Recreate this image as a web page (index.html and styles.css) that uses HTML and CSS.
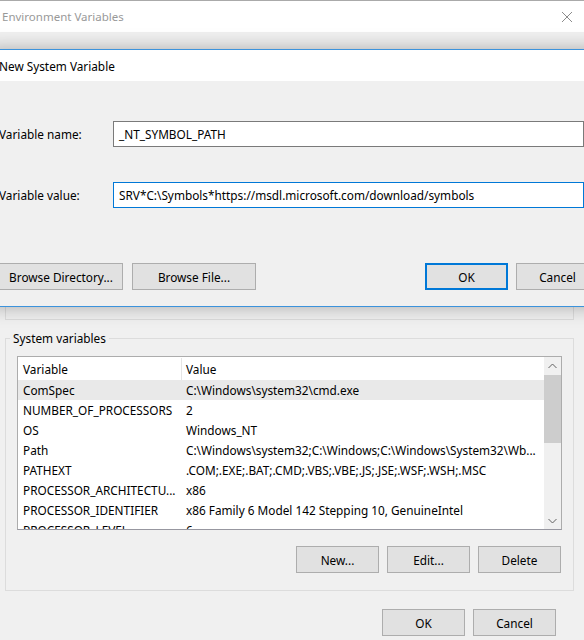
FILE: index.html
```html
<!DOCTYPE html>
<html lang="en">
<head>
    <meta charset="UTF-8">
    <title>Environment Variables</title>
    <link rel="stylesheet" href="styles.css">
</head>
<body>
    <div class="env">
        <div class="env-title">
            <span class="win-caption">Environment Variables</span>
            <svg class="close" width="12" height="12" viewBox="0 0 12 12">
                <path d="M1 1 L11 11 M11 1 L1 11" stroke="#8c8c8c" stroke-width="1" fill="none"/>
            </svg>
        </div>
        <div class="env-body">
            <div class="group user-group"></div>

            <div class="group system-group">
                <div class="group-label">System variables</div>
                <div class="listview">
                    <div class="list-main">
                        <div class="list-head">
                            <div class="col-var">Variable</div>
                            <div class="col-val">Value</div>
                        </div>
                        <div class="row selected"><div class="col-var">ComSpec</div><div class="col-val">C:\Windows\system32\cmd.exe</div></div>
                        <div class="row"><div class="col-var">NUMBER_OF_PROCESSORS</div><div class="col-val">2</div></div>
                        <div class="row"><div class="col-var">OS</div><div class="col-val">Windows_NT</div></div>
                        <div class="row"><div class="col-var">Path</div><div class="col-val">C:\Windows\system32;C:\Windows;C:\Windows\System32\Wb...</div></div>
                        <div class="row"><div class="col-var">PATHEXT</div><div class="col-val">.COM;.EXE;.BAT;.CMD;.VBS;.VBE;.JS;.JSE;.WSF;.WSH;.MSC</div></div>
                        <div class="row"><div class="col-var">PROCESSOR_ARCHITECTU...</div><div class="col-val">x86</div></div>
                        <div class="row"><div class="col-var">PROCESSOR_IDENTIFIER</div><div class="col-val">x86 Family 6 Model 142 Stepping 10, GenuineIntel</div></div>
                        <div class="row"><div class="col-var">PROCESSOR_LEVEL</div><div class="col-val">6</div></div>
                    </div>
                    <div class="scrollbar">
                        <div class="arrow">
                            <svg width="9" height="6" viewBox="0 0 9 6"><path d="M0.5 5 L4.5 1 L8.5 5" stroke="#606060" fill="none"/></svg>
                        </div>
                        <div class="track"><div class="thumb"></div></div>
                        <div class="arrow">
                            <svg width="9" height="6" viewBox="0 0 9 6"><path d="M0.5 1 L4.5 5 L8.5 1" stroke="#606060" fill="none"/></svg>
                        </div>
                    </div>
                </div>
                <div class="btn-row list-btns">
                    <button class="btn">New...</button>
                    <button class="btn">Edit...</button>
                    <button class="btn">Delete</button>
                </div>
            </div>

            <div class="btn-row env-btns">
                <button class="btn">OK</button>
                <button class="btn">Cancel</button>
            </div>
        </div>
    </div>

    <!-- modal dialog on top of the main window -->
    <div class="dialog">
        <div class="dialog-title">New System Variable</div>
        <div class="dialog-body">
            <div class="field">
                <label>Variable name:</label>
                <div class="input">_NT_SYMBOL_PATH</div>
            </div>
            <div class="field">
                <label>Variable value:</label>
                <div class="input focused">SRV*C:\Symbols*https://msdl.microsoft.com/download/symbols</div>
            </div>
            <div class="dialog-actions">
                <div class="btn-row">
                    <button class="btn wide">Browse Directory...</button>
                    <button class="btn wide">Browse File...</button>
                </div>
                <div class="btn-row">
                    <button class="btn default">OK</button>
                    <button class="btn">Cancel</button>
                </div>
            </div>
        </div>
    </div>
</body>
</html>
```

FILE: styles.css
```css
:root {
    --face: #f0f0f0;
    --btn-face: #e1e1e1;
    --btn-border: #adadad;
    --accent: #0078d7;
    --frame-blue: #3c93dc;
    --group-line: #dcdcdc;
}

* {
    box-sizing: border-box;
}

body {
    margin: 0;
    width: 584px;
    height: 640px;
    overflow: hidden;
    position: relative;
    background: var(--face);
    font-family: "Segoe UI", "Noto Sans", sans-serif;
    font-size: 11.8px;
    color: #000;
}

/* main window */
.env-title {
    height: 32px;
    background: #fff;
    border-top: 1px solid #aaaaaa;
    display: flex;
    align-items: center;
    justify-content: space-between;
    padding: 0 11px 0 2px;
    color: #999;
}

.win-caption {
    font-size: 11.5px;
}

.env-body {
    padding: 0 10px 0 5px;
}

.group {
    border: 1px solid var(--group-line);
}

/* sits under the dialog, only its bottom edge shows */
.user-group {
    margin-top: 20px;
    height: 268px;
}

.system-group {
    margin-top: 18px;
    height: 253px;
    padding: 0 11px;
}

.group-label {
    width: fit-content;
    margin: -9px 0 0 -7px;
    padding: 0 3px;
    line-height: 16px;
    background: var(--face);
}

/* list view */
.listview {
    margin-top: 10px;
    height: 174px;
    display: flex;
    background: #fff;
    border: 1px solid #acacac;
    border-bottom-color: #9797a0;
}

.list-main {
    flex: 1;
    overflow: hidden;
}

.list-head,
.row {
    display: grid;
    grid-template-columns: 164px 1fr;
    white-space: nowrap;
}

.list-head {
    height: 23px;
    line-height: 23px;
    padding-top: 1px;
}

.list-head .col-var {
    border-right: 1px solid #e5e5e5;
}

.row {
    height: 20px;
    line-height: 20px;
}

.row.selected {
    background: #e9e9e9;
}

.col-var {
    padding-left: 5px;
    overflow: hidden;
}

.col-val {
    padding-left: 4px;
    overflow: hidden;
}

.scrollbar {
    width: 17px;
    display: flex;
    flex-direction: column;
    background: var(--face);
}

.arrow {
    height: 17px;
    display: flex;
    align-items: center;
    justify-content: center;
}

.track {
    flex: 1;
    padding-top: 1px;
}

.thumb {
    height: 68px;
    background: #cdcdcd;
}

/* buttons */
.btn-row {
    display: flex;
    gap: 8px;
}

.btn {
    width: 83px;
    height: 27px;
    padding: 0;
    background: var(--btn-face);
    border: 1px solid var(--btn-border);
    font: inherit;
    color: #000;
}

.btn.wide {
    width: 124px;
}

.btn.default {
    border-color: var(--accent);
    box-shadow: inset 0 0 0 1px var(--accent);
}

.list-btns {
    margin-top: 16px;
    justify-content: flex-end;
    padding-right: 1px;
}

.env-btns {
    margin-top: 18px;
    justify-content: flex-end;
    padding-right: 18px;
}

/* New System Variable dialog */
.dialog {
    position: absolute;
    top: 49px;
    left: -13px;
    width: 625px;
    border-top: 1px solid var(--frame-blue);
    border-bottom: 1px solid var(--frame-blue);
    box-shadow: 0 0 18px rgba(0, 0, 0, 0.3);
}

.dialog-title {
    height: 31px;
    line-height: 32px;
    padding-left: 12px;
    background: #fff;
}

.dialog-body {
    background: var(--face);
    padding: 40px 13px 16px 12px;
}

.field {
    display: flex;
    align-items: center;
    height: 26px;
}

.field + .field {
    margin-top: 35px;
}

.field label {
    width: 114px;
}

.input {
    width: 471px;
    height: 26px;
    line-height: 24px;
    padding-left: 5px;
    background: #fff;
    border: 1px solid #7a7a7a;
    white-space: nowrap;
    overflow: hidden;
}

.input.focused {
    border-color: var(--accent);
}

.dialog-actions {
    margin-top: 55px;
    display: flex;
    justify-content: space-between;
}

.dialog-actions .btn-row:first-child {
    gap: 9px;
}
```
